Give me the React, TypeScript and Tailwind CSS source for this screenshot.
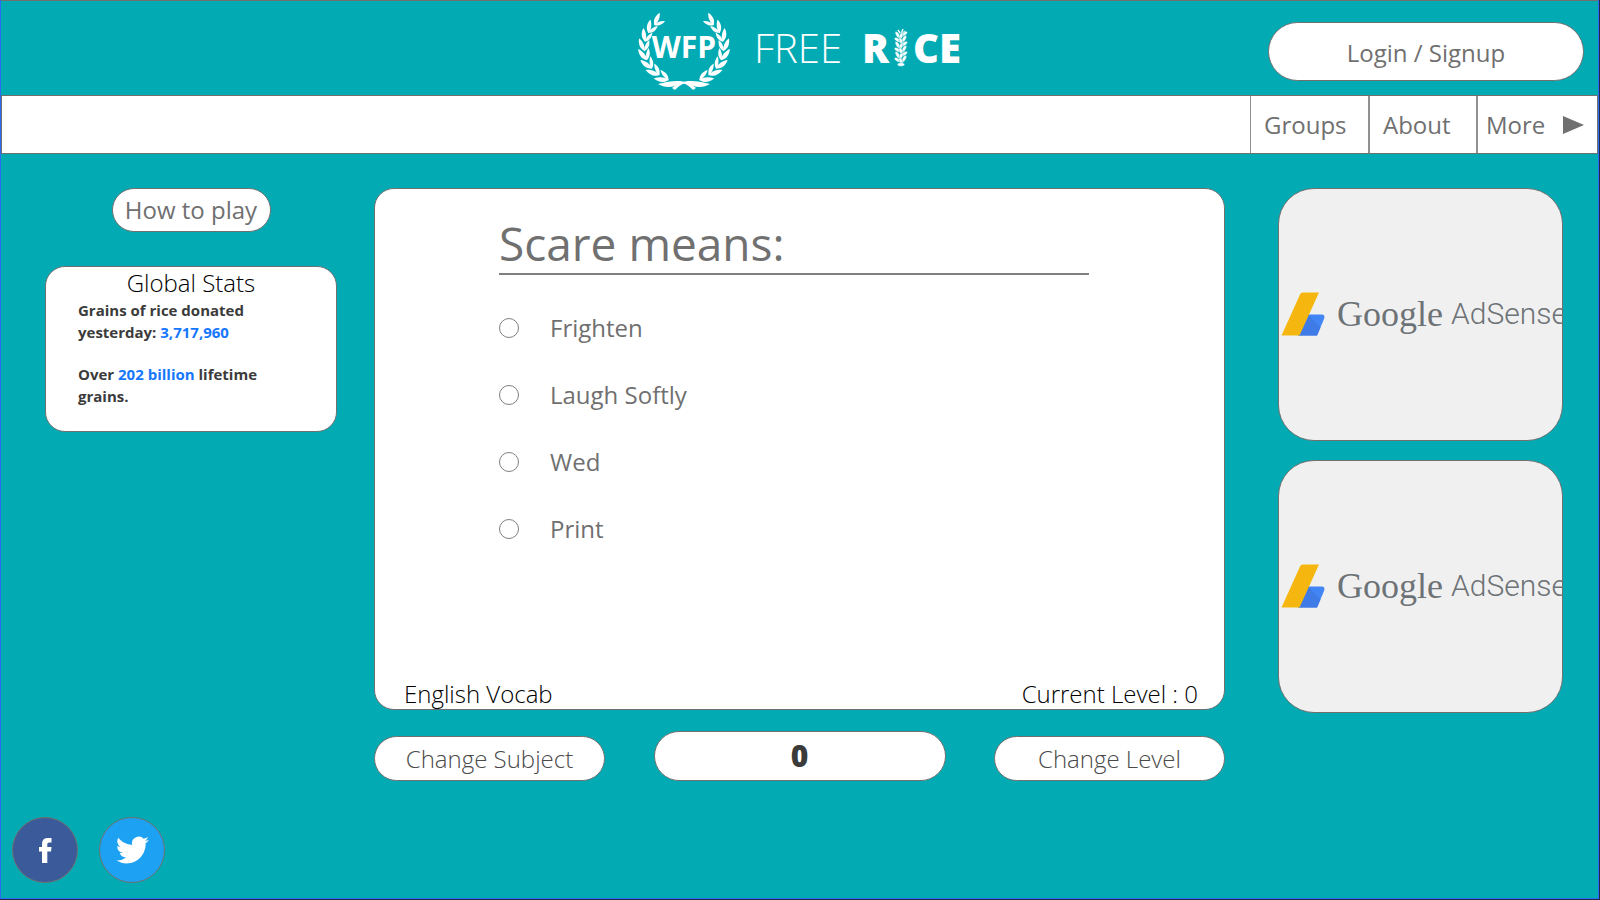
import { useState } from "react";

const leafPath = "M-1 0 C3 -3.8 8 -4.2 13.500 -1 C9 1.8 3.600 2 -1 0 Z";

const leaves = Array.from({ length: 8 }, (_, i) => {
  const degrees = 114 + i * 15.5;
  const angle = (degrees * Math.PI) / 180;
  return {
    x: 46 + 39.5 * Math.cos(angle),
    y: 37 + 34.5 * Math.sin(angle),
    heading: degrees + 90,
    size: 1.05 - i * 0.015,
  };
});

function WreathSide() {
  return (
    <g>
      {leaves.map((leaf, i) => (
        <g key={i} transform={`translate(${leaf.x} ${leaf.y}) scale(${leaf.size})`}>
          <path d={leafPath} transform={`rotate(${leaf.heading - 16})`} />
          <path d={leafPath} transform={`rotate(${leaf.heading + 24}) scale(0.85 -0.8)`} />
        </g>
      ))}
      <path d="M58 77 C50 69 38 68 20 73 C28 78 37 76 43 72 C48 72 52 76 55 79 Z" />
    </g>
  );
}

function Wreath() {
  return (
    <svg viewBox="0 0 92 80" className="absolute inset-0 size-full" fill="white" aria-hidden="true">
      <WreathSide />
      <g transform="translate(92 0) scale(-1 1)">
        <WreathSide />
      </g>
    </svg>
  );
}

function RiceStalk() {
  return (
    <svg viewBox="0 0 14 38" className="mx-[5px] h-[38px] w-[14px]" fill="white" stroke="#02abb3" strokeWidth="0.4" aria-hidden="true">
      <path d="M6 4 L4 1 M7 5 L9 0 M8 5 L11 2" stroke="white" strokeWidth="1.4" />
      {[5, 10, 15, 20, 25, 30].map((y, i) => (
        <g key={y}>
          <ellipse cx="3.8" cy={y + 1} rx="1.7" ry="4" transform={`rotate(${i % 2 ? -60 : -32} 3.8 ${y + 1})`} />
          <ellipse cx="10" cy={y} rx="1.7" ry="4" transform={`rotate(${i % 2 ? 30 : 58} 10 ${y})`} />
          <ellipse cx="7" cy={y + 2} rx="1.7" ry="3.4" transform={`rotate(${i % 2 ? -20 : 20} 7 ${y + 2})`} />
        </g>
      ))}
      <ellipse cx="7" cy="35.500" rx="3.6" ry="1.8" />
    </svg>
  );
}

function Logo() {
  return (
    <a href="#" className="flex items-center gap-6 text-white">
      <span className="relative flex h-20 w-[92px] items-center justify-center">
        <Wreath />
        <span className="relative pb-2 text-[30px] leading-8 font-bold">WFP</span>
      </span>
      <span className="flex items-center pb-[6px] text-[40px] leading-[48px]">
        <span className="mr-5 font-light">FREE</span>
        <span className="font-extrabold">R</span>
        <RiceStalk />
        <span className="font-extrabold">CE</span>
      </span>
    </a>
  );
}

function AdCard() {
  return (
    <a
      href="#"
      aria-label="Google AdSense"
      className="flex h-[253px] items-center overflow-hidden rounded-[36px] border border-[#707070] bg-[#f0f0f0] pb-[2px] pl-[2px] whitespace-nowrap text-[#6d7276]"
    >
      <svg viewBox="0 0 44 44" className="size-11 shrink-0" aria-hidden="true">
        <path d="M27 22.500 H41 Q44.500 22.500 43 27 L36 43.500 H17 Z" fill="#4285f4" />
        <path d="M26 23 L27.500 23 L39.500 35.500 L36 43.500 H17 Z" fill="#3f7be6" />
        <path d="M21.500 0.500 H38 L18.500 43.500 H0.500 L19 2.500 Q20 0.500 21.500 0.500 Z" fill="#f5b70f" />
      </svg>
      <span className="pl-3 font-['Liberation_Serif',serif] text-[36px] leading-10">Google</span>
      <span className="pl-2 font-[Roboto,sans-serif] text-[30px] leading-10 font-light">AdSense</span>
    </a>
  );
}

const answers = ["Frighten", "Laugh Softly", "Wed", "Print"];
const pill = "rounded-full border border-[#707070] bg-white";

export default function App() {
  const [answer, setAnswer] = useState("");

  return (
    <div className="min-h-screen bg-[#232a48] pr-px pb-px font-['Open_Sans',sans-serif] text-2xl">
      <div className="flex min-h-[calc(100vh-1px)] flex-col border border-t-0 border-[#2a6cf6] bg-[#02abb3]">
        <header className="grid grid-cols-[1fr_auto_1fr] items-center border-y border-[#707070] pt-[10px] pb-1">
          <span />
          <Logo />
          <button type="button" className={`${pill} mr-[14px] h-[59px] w-[316px] justify-self-end pt-1 text-[#707070]`}>
            Login / Signup
          </button>
        </header>

        <nav className="flex h-[58px] justify-end border-x border-b border-[#707070] bg-white text-[#707070]">
          <a href="#" className="flex w-[118px] items-center border-l border-[#909090] pl-[13px]">Groups</a>
          <a href="#" className="flex w-[108px] items-center border-l-2 border-[#909090] pl-[13px]">About</a>
          <a href="#" className="flex w-[121px] items-center justify-between border-l-2 border-[#909090] pr-[13px] pl-2">
            More
            <svg viewBox="0 0 21 18" className="h-[18px] w-[21px]" fill="#707070" aria-hidden="true">
              <path d="M0 0 L21 9 L0 18 Z" />
            </svg>
          </a>
        </nav>

        <main className="grid grid-cols-[292px_1fr_285px] items-start pt-[34px] pr-[35px] pl-11">
          <aside className="flex flex-col items-center gap-[34px]">
            <button type="button" className={`${pill} h-11 w-[159px] text-[#707070]`}>How to play</button>
            <section className="h-[166px] w-full rounded-[20px] border border-[#707070] bg-white px-8 text-[#3b3b3b]">
              <h2 className="text-center leading-8 font-light text-black">Global Stats</h2>
              <div className="text-[15px] leading-[22px] font-bold">
                <p>Grains of rice donated</p>
                <p>
                  yesterday: <span className="text-[#1677ff]">3,717,960</span>
                </p>
                <p className="mt-5">
                  Over <span className="text-[#1677ff]">202 billion</span> lifetime
                </p>
                <p>grains.</p>
              </div>
            </section>
          </aside>

          <div className="mr-[53px] ml-[37px] flex flex-col gap-[21px]">
            <section className="flex h-[522px] flex-col rounded-[20px] border border-[#707070] bg-white pt-6">
              <fieldset className="ml-[124px] max-w-[590px] text-[#707070]">
                <legend className="w-full border-b-2 border-[#808080] text-[46px] leading-[60px]">Scare means:</legend>
                <div className="flex flex-col gap-[31px] pt-[35px]">
                  {answers.map((a) => (
                    <label key={a} className="flex items-center gap-[31px] leading-9">
                      <input
                        type="radio"
                        name="answer"
                        value={a}
                        checked={answer === a}
                        onChange={() => setAnswer(a)}
                        className="size-5 appearance-none rounded-full border border-[#808080] bg-white checked:border-4 checked:border-[#02abb3]"
                      />
                      {a}
                    </label>
                  ))}
                </div>
              </fieldset>
              <div className="mt-auto flex justify-between pr-[26px] pb-px pl-[29px] leading-7 font-light text-black">
                <span>English Vocab</span>
                <span>Current Level : 0</span>
              </div>
            </section>
            <div className="flex items-end justify-between">
              <button type="button" className={`${pill} h-[45px] w-[231px] font-light text-[#4a4a4a]`}>Change Subject</button>
              <output className="flex h-[50px] w-[292px] items-center justify-center rounded-full border border-[#707070] bg-white text-[30px] font-extrabold text-[#3b3b3b]">
                0
              </output>
              <button type="button" className={`${pill} h-[45px] w-[231px] font-light text-[#4a4a4a]`}>Change Level</button>
            </div>
          </div>

          <aside className="flex flex-col gap-[19px]">
            <AdCard />
            <AdCard />
          </aside>
        </main>

        <footer className="mt-auto flex gap-[21px] pb-[15px] pl-[11px]">
          <a href="#" aria-label="Facebook" className="flex size-[66px] items-center justify-center rounded-full border border-[#707070] bg-[#3b5a9a]">
            <svg viewBox="0 0 13 25" className="h-[25px] w-[13px]" fill="white" aria-hidden="true">
              <path d="M3 25 V13.500 H0 V9 H3 V6.500 C3 2 5 0 9 0 H12.500 V4.500 H10.500 C8.700 4.500 8.300 5.300 8.300 6.800 V9 H12.500 L12 13.500 H8.300 V25 Z" />
            </svg>
          </a>
          <a href="#" aria-label="Twitter" className="flex size-[66px] items-center justify-center rounded-full border border-[#707070] bg-[#1da1f2]">
            <svg viewBox="0 2 24 20" className="h-7 w-[33px]" fill="white" aria-hidden="true">
              <path d="M23.950 4.570a10 10 0 0 1-2.820.770 4.960 4.960 0 0 0 2.160-2.720c-.950.550-2 .950-3.130 1.180a4.920 4.920 0 0 0-8.380 4.480C7.690 8.090 4.070 6.130 1.640 3.160a4.920 4.920 0 0 0 1.520 6.570 4.900 4.900 0 0 1-2.230-.610v.060a4.920 4.920 0 0 0 3.950 4.830 5 5 0 0 1-2.210.080 4.940 4.940 0 0 0 4.600 3.420A9.870 9.870 0 0 1 0 19.540a14 14 0 0 0 7.550 2.210c9.050 0 14-7.500 14-13.980 0-.210 0-.420-.020-.630a9.900 9.900 0 0 0 2.420-2.570z" />
            </svg>
          </a>
        </footer>
      </div>
    </div>
  );
}
